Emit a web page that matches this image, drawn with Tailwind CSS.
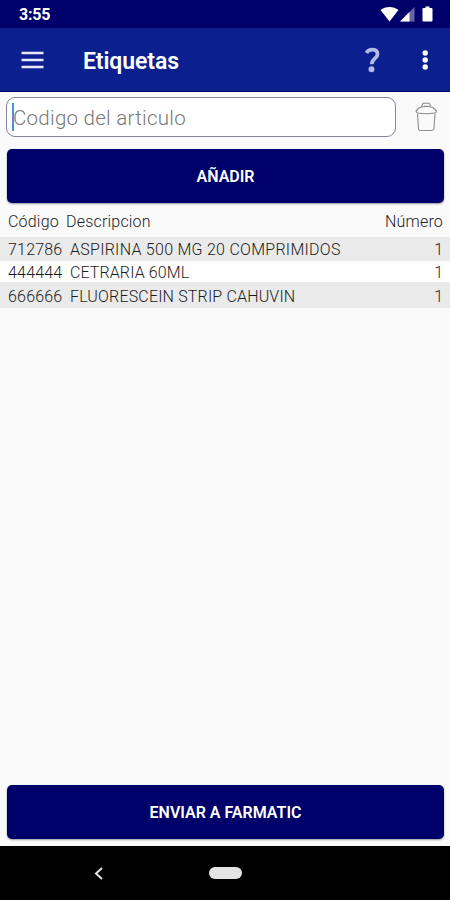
<!DOCTYPE html>
<html lang="es">
<head>
    <meta charset="UTF-8">
    <meta name="viewport" content="width=device-width, initial-scale=1.0">
    <title>Etiquetas</title>
    <script src="https://cdn.jsdelivr.net/npm/@tailwindcss/browser@4"></script>
</head>
<body class="bg-[#fafafa] font-['Roboto',sans-serif]">
    <div class="flex flex-col w-[450px] h-[900px] overflow-hidden">
        <!-- Status bar -->
        <div class="flex items-center justify-between h-7 shrink-0 bg-[#00006a] pl-[19px] pr-[17px] text-white">
            <span class="text-base leading-7 pt-px font-bold tracking-[-0.2px]">3:55</span>
            <div class="flex items-center">
                <svg class="w-[19px] h-4" viewBox="0 0 19 16" fill="currentColor"><path d="M0.5 4C5.5-.1 13.500-.1 18.500 4L9.500 15.500Z"/></svg>
                <svg class="w-[15px] h-4 ml-px" viewBox="0 0 15 16" fill="currentColor"><path opacity=".4" d="M0 15.500L14.500 1V15.500Z"/><path d="M0 15.500L9.500 6V15.500Z"/></svg>
                <svg class="w-[11px] h-4 ml-[7px]" viewBox="0 0 11 16" fill="currentColor"><path d="M3.500 0.500h4V2H9.500q1 0 1 1V14.500q0 1-1 1h-8q-1 0-1-1V3q0-1 1-1h2Z"/></svg>
            </div>
        </div>

        <!-- App bar -->
        <div class="flex items-center h-16 shrink-0 bg-[#0c1f8e] border-b border-[#000070] pl-[21px] pr-[21px] text-white">
            <button aria-label="Menu">
                <svg class="w-[23px] h-[18px]" viewBox="0 0 23 18" stroke="#e8e8ff" stroke-width="2.600"><path d="M0.500 2H22.500M0.500 9H22.500M0.500 16H22.500"/></svg>
            </button>
            <h1 class="ml-[39px] mt-[5px] text-[23px] leading-8 font-semibold tracking-[-0.1px]">Etiquetas</h1>
            <div class="flex items-center ml-auto">
                <svg class="w-4 h-[26px]" viewBox="0 0 16 26" fill="none"><path d="M1.500 6C3.500 1.800 12.500 1 12.500 7.200C12.500 11.500 6.800 11.500 6.800 17.200" stroke="#b3bbe6" stroke-width="3.800"/><circle cx="6.500" cy="22.200" r="3" fill="#b3bbe6"/></svg>
                <svg class="w-[7px] h-5 ml-[41px]" viewBox="0 0 7 20" fill="#fff"><circle cx="3.200" cy="3" r="2.700"/><circle cx="3.200" cy="10" r="2.700"/><circle cx="3.200" cy="17" r="2.700"/></svg>
            </div>
        </div>

        <!-- Article code -->
        <div class="flex pt-[5px] pl-1.5 shrink-0">
            <div class="flex items-center w-[390px] h-10 rounded-[9px] border border-[#85859c] bg-white pl-[5px]">
                <span class="w-0.5 h-7 bg-[#4a8fe0]"></span>
                <span class="-ml-px mt-[3px] text-[20.500px] font-light tracking-[0.27px] text-[#777]">Codigo del articulo</span>
            </div>
            <svg class="w-[23px] h-[30px] ml-[19px] mt-[5px]" viewBox="0 0 23 30" fill="none" stroke="#8d8d8d" stroke-width="1.100" stroke-linejoin="round">
                <path d="M6.500 4.500L8 1.200H14L16 4.500M9 4.200h4.500M4.500 5.500Q11 3.500 18 5.500L21.500 9Q21.500 10.500 19.500 11Q11 12.500 3 11Q1 10.500 1 9Z"/>
                <path d="M2.500 11.500L3.500 26.500Q3.700 28.500 6 28.500H16.500Q18.800 28.500 19 26.500L20 11.500"/>
            </svg>
        </div>

        <button class="shrink-0 w-[437px] h-[54px] mt-3 ml-[7px] pt-0.5 rounded-[5px] bg-[#00006a] text-[16px] font-semibold text-white shadow-[0_1px_2px_#0006]">AÑADIR</button>

        <!-- Articles -->
        <div class="shrink-0 text-[16px] text-[#1c1c1c]">
            <div class="flex h-[34px] pl-2 pr-[7px] leading-[37px] font-light tracking-[0.2px]">
                <span class="w-[58px]">Código</span>
                <span>Descripcion</span>
                <span class="ml-auto">Número</span>
            </div>
            <div class="flex h-6 pl-2 pr-[7px] leading-[25px] bg-[#eaeaea] font-light">
                <span class="w-[62px] tracking-[0.2px]">712786</span>
                <span class="tracking-[0.27px]">ASPIRINA 500 MG 20 COMPRIMIDOS</span>
                <span class="ml-auto">1</span>
            </div>
            <div class="flex h-[21px] pl-2 pr-[7px] leading-[23px] bg-white font-light">
                <span class="w-[62px] tracking-[0.2px]">444444</span>
                <span class="tracking-[0.1px]">CETRARIA 60ML</span>
                <span class="ml-auto">1</span>
            </div>
            <div class="flex h-[26px] pl-2 pr-[7px] leading-[29px] bg-[#eaeaea] font-light">
                <span class="w-[62px] tracking-[0.2px]">666666</span>
                <span class="tracking-[0.17px]">FLUORESCEIN STRIP CAHUVIN</span>
                <span class="ml-auto">1</span>
            </div>
        </div>

        <button class="shrink-0 w-[437px] h-[54px] mt-auto mb-[7px] ml-[7px] pt-0.5 rounded-[5px] bg-[#00006a] text-[16px] font-semibold text-white shadow-[0_1px_2px_#0006]">ENVIAR A FARMATIC</button>

        <!-- Navigation bar -->
        <div class="flex items-center h-[54px] shrink-0 bg-black pl-[94px]">
            <svg class="w-[9px] h-[13px]" viewBox="0 0 9 13" fill="none" stroke="#e4e4e4" stroke-width="2"><path d="M8 1L2 6.500L8 12"/></svg>
            <span class="w-[33px] h-3 ml-[106px] rounded-full bg-[#e4e4e4]"></span>
        </div>
    </div>
</body>
</html>
